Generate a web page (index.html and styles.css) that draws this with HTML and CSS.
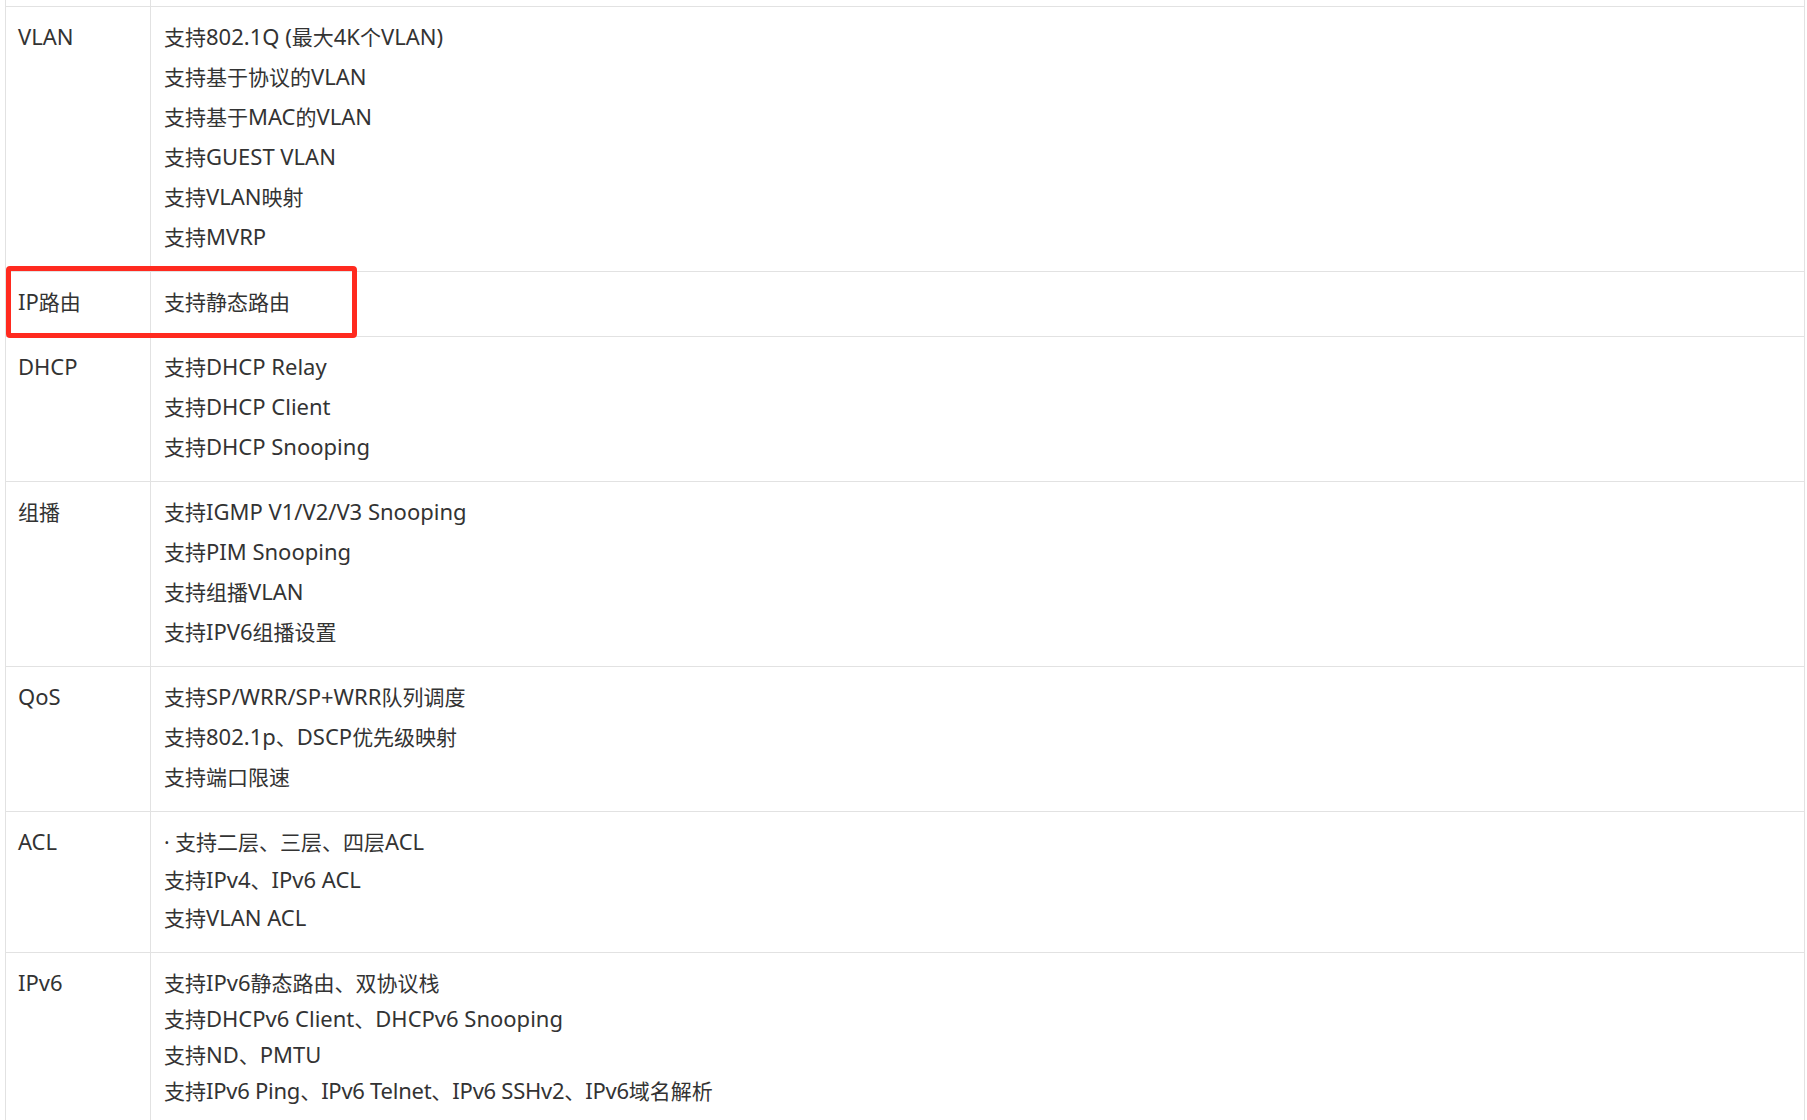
FILE: index.html
```html
<!DOCTYPE html>
<html lang="zh-CN">
<head>
<meta charset="utf-8">
<title>规格</title>
<link rel="stylesheet" href="styles.css">
</head>
<body>
<div class="page">
  <div class="spec">
    <div class="row stub"><div class="key"></div><div class="val"></div></div>
    <div class="row">
      <div class="key"><div class="ln"><span class="en">VLAN</span></div></div>
      <div class="val">
        <div class="ln">支持<span class="en">802.1Q (</span>最大<span class="en">4K</span>个<span class="en">VLAN)</span></div>
        <div class="ln">支持基于协议的<span class="en">VLAN</span></div>
        <div class="ln">支持基于<span class="en">MAC</span>的<span class="en">VLAN</span></div>
        <div class="ln">支持<span class="en">GUEST VLAN</span></div>
        <div class="ln">支持<span class="en">VLAN</span>映射</div>
        <div class="ln">支持<span class="en">MVRP</span></div>
      </div>
    </div>
    <div class="row">
      <div class="key"><div class="ln"><span class="en">IP</span>路由</div></div>
      <div class="val">
        <div class="ln">支持静态路由</div>
      </div>
    </div>
    <div class="row">
      <div class="key"><div class="ln"><span class="en">DHCP</span></div></div>
      <div class="val">
        <div class="ln">支持<span class="en">DHCP Relay</span></div>
        <div class="ln">支持<span class="en">DHCP Client</span></div>
        <div class="ln">支持<span class="en">DHCP Snooping</span></div>
      </div>
    </div>
    <div class="row">
      <div class="key"><div class="ln">组播</div></div>
      <div class="val">
        <div class="ln">支持<span class="en">IGMP V1/V2/V3 Snooping</span></div>
        <div class="ln">支持<span class="en">PIM Snooping</span></div>
        <div class="ln">支持组播<span class="en">VLAN</span></div>
        <div class="ln">支持<span class="en">IPV6</span>组播设置</div>
      </div>
    </div>
    <div class="row">
      <div class="key"><div class="ln"><span class="en">QoS</span></div></div>
      <div class="val">
        <div class="ln">支持<span class="en">SP/WRR/SP+WRR</span>队列调度</div>
        <div class="ln">支持<span class="en">802.1p</span>、<span class="en">DSCP</span>优先级映射</div>
        <div class="ln">支持端口限速</div>
      </div>
    </div>
    <div class="row">
      <div class="key"><div class="ln"><span class="en">ACL</span></div></div>
      <div class="val">
        <div class="ln">· 支持二层、三层、四层<span class="en">ACL</span></div>
        <div class="ln ln-tight">支持<span class="en">IPv4</span>、<span class="en">IPv6 ACL</span></div>
        <div class="ln">支持<span class="en">VLAN ACL</span></div>
      </div>
    </div>
    <div class="row row-compact">
      <div class="key"><div class="ln"><span class="en">IPv6</span></div></div>
      <div class="val">
        <div class="ln">支持<span class="en">IPv6</span>静态路由、双协议栈</div>
        <div class="ln">支持<span class="en">DHCPv6 Client</span>、<span class="en">DHCPv6 Snooping</span></div>
        <div class="ln">支持<span class="en">ND</span>、<span class="en">PMTU</span></div>
        <div class="ln ln-dense">支持<span class="en">IPv6 Ping</span>、<span class="en">IPv6 Telnet</span>、<span class="en">IPv6 SSHv2</span>、<span class="en">IPv6</span>域名解析</div>
      </div>
    </div>
  </div>
  <div class="highlight"></div>
</div>
</body>
</html>
```

FILE: styles.css
```css
html, body {
  margin: 0;
  padding: 0;
  background: #ffffff;
}

body {
  font-family: "Noto Sans", "Noto Sans CJK SC", sans-serif;
  font-size: 21px;
  color: #333333;
}

.en {
  font-family: "Noto Sans", sans-serif;
  font-size: 22px;
  line-height: 20px;
}

.page {
  position: relative;
  padding-left: 5px;
  height: 1120px;
  overflow: hidden;
}

.spec {
  width: 1798px;
  border-left: 1px solid #e2e2e2;
  border-right: 1px solid #e2e2e2;
}

.row {
  display: grid;
  grid-template-columns: 145px 1fr;
  border-bottom: 1px solid #e2e2e2;
}

.key {
  border-right: 1px solid #e2e2e2;
  padding: 10px 12px 14px 12px;
}

.val {
  padding: 10px 12px 14px 13px;
}

.ln {
  line-height: 40px;
  height: 40px;
  white-space: nowrap;
}

.ln-tight {
  line-height: 36px;
  height: 36px;
}

.ln-dense .en {
  letter-spacing: -0.25px;
}

.stub .key,
.stub .val {
  padding: 0;
  height: 6px;
}

.row-compact .key,
.row-compact .val {
  padding-top: 12px;
}

.row-compact .ln {
  line-height: 36px;
  height: 36px;
}

.highlight {
  position: absolute;
  left: 6px;
  top: 266px;
  width: 341px;
  height: 62px;
  border: 5px solid #ff2a1f;
  border-radius: 4px;
}
```
